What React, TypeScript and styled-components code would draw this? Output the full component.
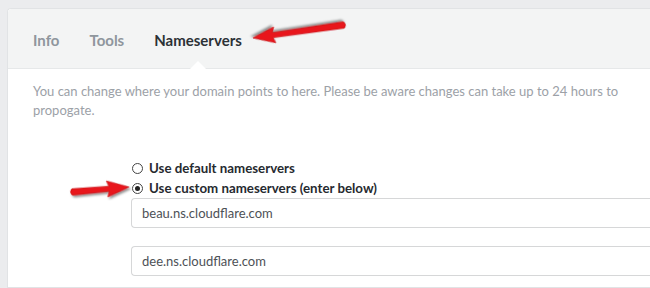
import { createGlobalStyle, styled } from 'styled-components';

const GlobalStyle = createGlobalStyle`
  html, body {
    margin: 0;
    background: #ebecee;
    font-family: Lato, 'Open Sans', Arial, sans-serif;
    overflow: hidden;
  }
`;

const Page = styled.div`
  position: relative;
  padding: 8px 0 0 7px;
  height: 288px;
  box-sizing: border-box;
`;

const Card = styled.div`
  background: #fff;
  border: 1px solid #e1e3e5;
  border-right: none;
  border-radius: 4px 0 0 0;
  height: 100%;
  box-sizing: border-box;
`;

const TabBar = styled.nav`
  display: flex;
  align-items: center;
  gap: 30px;
  height: 60px;
  padding: 2px 0 0 25px;
  box-sizing: border-box;
  background: #f3f4f4;
  border-bottom: 1px solid #e6e8e9;
  border-radius: 4px 0 0 0;
`;

const Tab = styled.span<{ $active?: boolean }>`
  position: relative;
  font-size: 15px;
  font-weight: 700;
  color: ${({ $active }) => ($active ? '#2c3136' : '#8f969d')};

  &::after {
    content: '';
    display: ${({ $active }) => ($active ? 'block' : 'none')};
    position: absolute;
    left: 50%;
    bottom: -20px;
    margin-left: -8px;
    border: 8px solid transparent;
    border-bottom-color: #fff;
    border-top: none;
  }
`;

const Body = styled.div`
  padding: 13px 0 0 25px;
`;

const Description = styled.p`
  margin: 0 25px 0 0;
  font-size: 13px;
  line-height: 19px;
  color: #9ca1a7;
`;

const Form = styled.div`
  margin: 38px 0 0 98px;
  display: flex;
  flex-direction: column;
`;

const RadioRow = styled.label`
  display: flex;
  align-items: center;
  gap: 6px;
  height: 20px;
  font-size: 13.3px;
  font-weight: 700;
  color: #262a2f;
`;

const RadioDot = styled.span<{ $checked?: boolean }>`
  width: 9px;
  height: 9px;
  border: 1px solid #444;
  border-radius: 50%;
  background: #fff;
  display: flex;
  align-items: center;
  justify-content: center;
  margin-left: 1px;

  &::after {
    content: '';
    display: ${({ $checked }) => ($checked ? 'block' : 'none')};
    width: 5px;
    height: 5px;
    border-radius: 50%;
    background: #222;
  }
`;

const Fields = styled.div`
  display: flex;
  flex-direction: column;
  gap: 18px;
`;

const Field = styled.div`
  height: 30px;
  border: 1px solid #d6d7d8;
  border-right: none;
  border-radius: 4px 0 0 4px;
  display: flex;
  align-items: center;
  padding-left: 10px;
  font-size: 13px;
  color: #4d5156;
  box-sizing: border-box;
`;

const ArrowSvg = styled.svg<{ $left: number; $top: number }>`
  position: absolute;
  left: ${({ $left }) => $left}px;
  top: ${({ $top }) => $top}px;
  overflow: visible;
  pointer-events: none;
`;

// red annotation arrow, drawn from tail (x1,y1) to tip (x2,y2)
function RedArrow({ x1, y1, x2, y2, id }: { x1: number; y1: number; x2: number; y2: number; id: string }) {
  const len = Math.hypot(x2 - x1, y2 - y1);
  const angle = (Math.atan2(y2 - y1, x2 - x1) * 180) / Math.PI;
  const left = Math.min(x1, x2) - 12;
  const top = Math.min(y1, y2) - 12;
  const w = Math.abs(x2 - x1) + 24;
  const h = Math.abs(y2 - y1) + 24;
  const head = 20;
  const d = `M0 -3.2 Q-3 0 0 3.2 L${len - head} 2.6 L${len - head - 2} 8 L${len} 0 L${len - head - 2} -8 L${len - head} -2.6 Z`;
  return (
    <ArrowSvg $left={left} $top={top} width={w} height={h}>
      <defs>
        <filter id={id} x="-30%" y="-80%" width="160%" height="260%">
          <feDropShadow dx="1.5" dy="2" stdDeviation="1.3" floodColor="#000" floodOpacity="0.45" />
        </filter>
      </defs>
      <g transform={`translate(${x1 - left} ${y1 - top}) rotate(${angle})`} filter={`url(#${id})`}>
        <path d={d} fill="#e8151b" stroke="#c40c10" strokeWidth="0.6" />
      </g>
    </ArrowSvg>
  );
}

export default function App() {
  return (
    <>
      <GlobalStyle />
      <Page>
        <Card>
          <TabBar>
            <Tab>Info</Tab>
            <Tab>Tools</Tab>
            <Tab $active>Nameservers</Tab>
          </TabBar>
          <Body>
            <Description>
              You can change where your domain points to here. Please be aware changes can take up to 24 hours to
              propogate.
            </Description>
            <Form>
              <RadioRow>
                <RadioDot />
                Use default nameservers
              </RadioRow>
              <RadioRow>
                <RadioDot $checked />
                Use custom nameservers (enter below)
              </RadioRow>
              <Fields>
                <Field>beau.ns.cloudflare.com</Field>
                <Field>dee.ns.cloudflare.com</Field>
              </Fields>
            </Form>
          </Body>
        </Card>
        <RedArrow id="arrTop" x1={344} y1={25} x2={253} y2={38} />
        <RedArrow id="arrRadio" x1={72} y1={192} x2={129} y2={187} />
      </Page>
    </>
  );
}
